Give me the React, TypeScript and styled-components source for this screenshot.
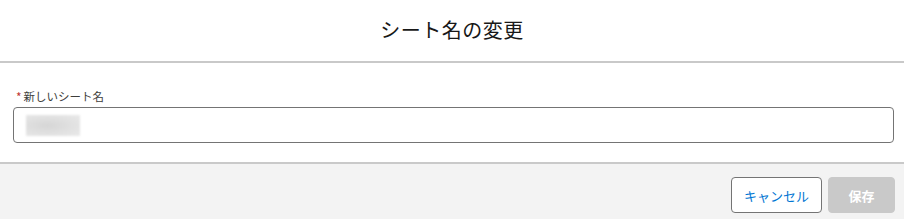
import React from "react";
import styled, { createGlobalStyle } from "styled-components";

const Global = createGlobalStyle`
  html, body { margin: 0; padding: 0; background: #ffffff; }
  body { font-family: "Noto Sans CJK JP", "Noto Sans", sans-serif; }
  * { box-sizing: border-box; }
`;

const Modal = styled.div`
  width: 904px;
  height: 219px;
  display: flex;
  flex-direction: column;
  overflow: hidden;
`;

const Header = styled.header`
  height: 63px;
  display: flex;
  align-items: center;
  justify-content: center;
  border-bottom: 2px solid #c9c9c9;
  padding-bottom: 1px;
`;

const Title = styled.h2`
  margin: 0;
  font-size: 20px;
  font-weight: 400;
  color: #181818;
  letter-spacing: 0.5px;
  line-height: 1;
`;

const Body = styled.div`
  padding: 24px 10px 19px 13px;
  display: flex;
  flex-direction: column;
  border-bottom: 2px solid #c9c9c9;
`;

const Label = styled.label`
  display: flex;
  align-items: center;
  height: 18px;
  padding-left: 3px;
  margin-bottom: 2px;
  font-size: 11.5px;
  color: #3e3e3c;
`;

const Required = styled.abbr`
  color: #c23934;
  text-decoration: none;
  margin-right: 2px;
  font-size: 12px;
`;

const Input = styled.div`
  height: 36px;
  border: 1px solid #747474;
  border-radius: 4px;
  display: flex;
  align-items: center;
  padding-left: 12px;
  background: #fff;
`;

const Blurred = styled.span`
  display: block;
  width: 54px;
  height: 21px;
  background: radial-gradient(ellipse at 40% 50%, #d6d6d6 0%, #e2e2e2 60%, #e9e9e9 100%);
  filter: blur(0.8px);
`;

const Footer = styled.footer`
  flex: 1;
  background: #f3f3f3;
  display: flex;
  justify-content: flex-end;
  align-items: flex-start;
  gap: 6px;
  padding: 13px 9px 0 0;
`;

const Button = styled.button<{ $primary?: boolean }>`
  height: 36px;
  width: ${(p) => (p.$primary ? "67px" : "91px")};
  border-radius: 4px;
  font-family: inherit;
  font-size: 13px;
  padding: 0;
  cursor: pointer;
  border: 1px solid ${(p) => (p.$primary ? "#c9c9c9" : "#747474")};
  background: ${(p) => (p.$primary ? "#c9c9c9" : "#ffffff")};
  color: ${(p) => (p.$primary ? "#ffffff" : "#0176d3")};
  font-weight: ${(p) => (p.$primary ? 700 : 400)};
`;

export default function App() {
  return (
    <>
      <Global />
      <Modal>
        <Header>
          <Title>シート名の変更</Title>
        </Header>
        <Body>
          <Label>
            <Required title="required">*</Required>新しいシート名
          </Label>
          <Input>
            <Blurred />
          </Input>
        </Body>
        <Footer>
          <Button>キャンセル</Button>
          <Button $primary disabled>
            保存
          </Button>
        </Footer>
      </Modal>
    </>
  );
}
